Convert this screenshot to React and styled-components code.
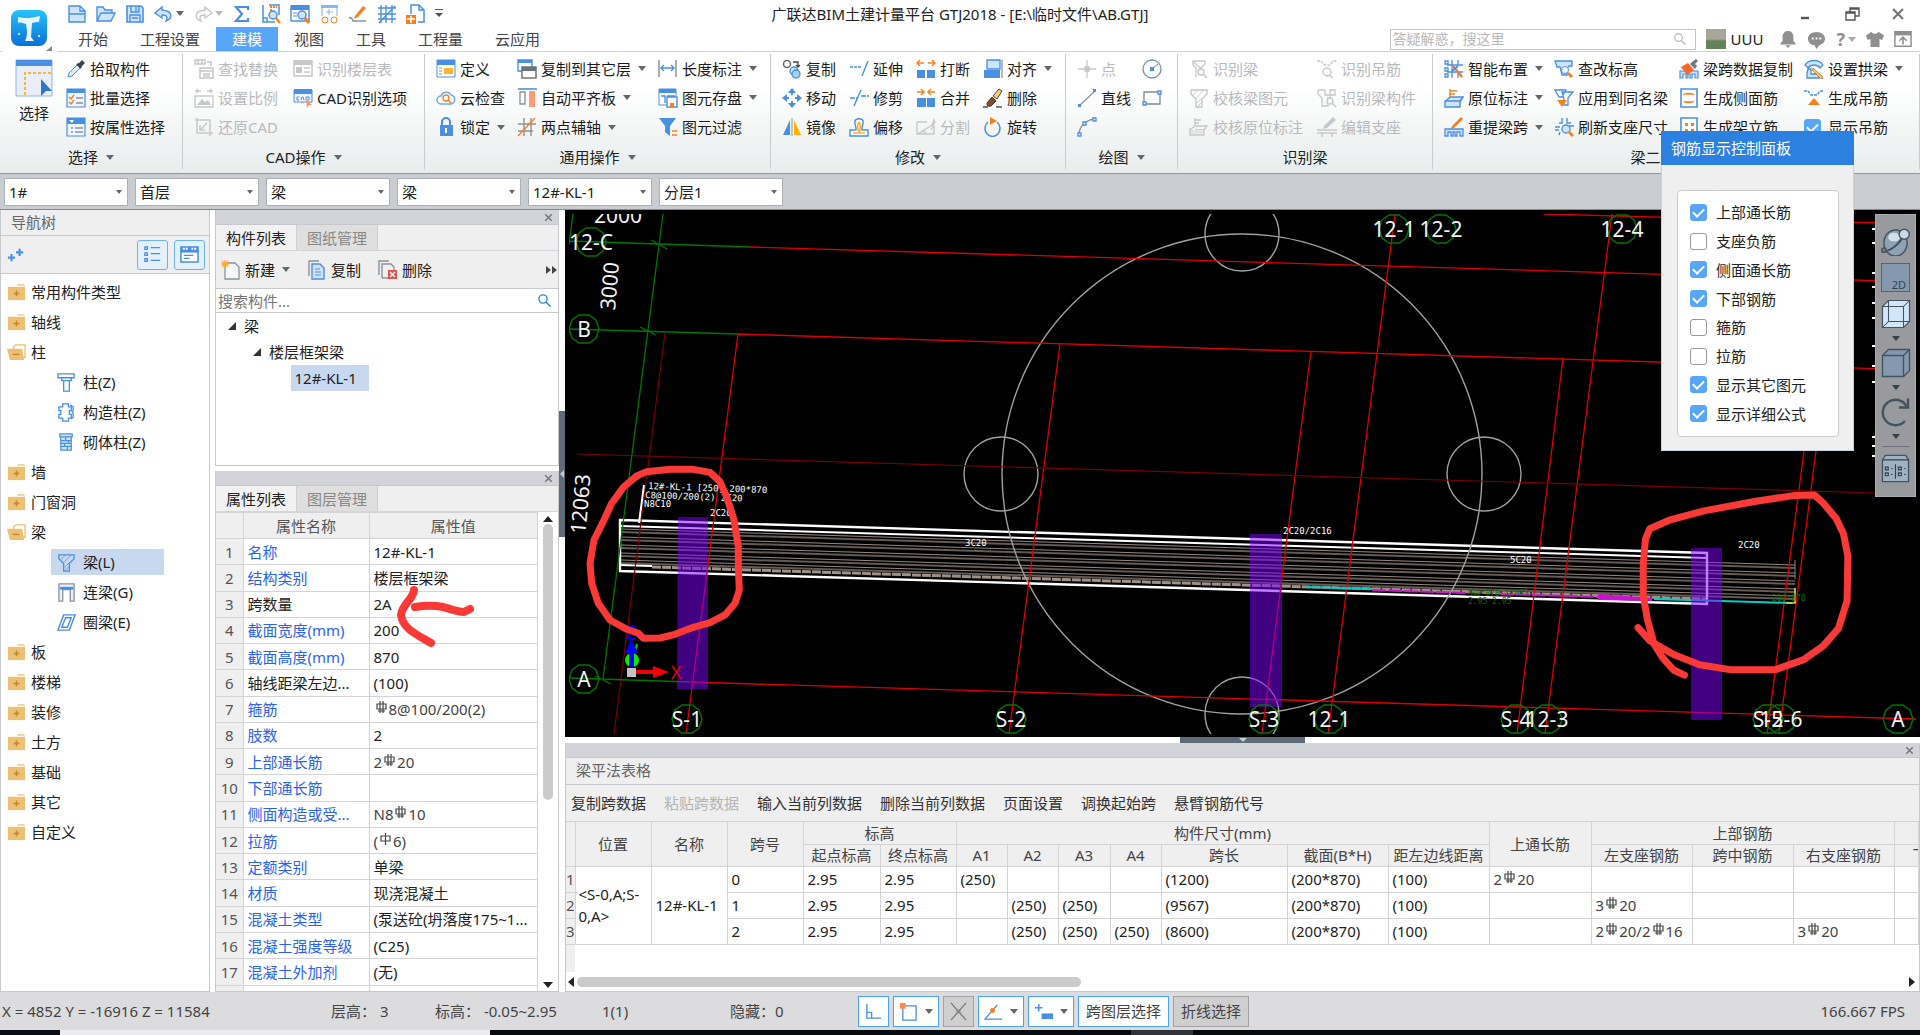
import React from "react";
import styled, { createGlobalStyle, css } from "styled-components";

const B = "#4a90e2";
const F = "#cfe3fa";
const O = "#f5821f";
const G = "#8a939b";
const D = "#c6c8ca";

const GlobalStyles = createGlobalStyle`
    * {
        box-sizing: border-box;
    }
    body {
        margin: 0;
        overflow: hidden;
        font-family: "Noto Sans", "Noto Sans CJK SC", sans-serif;
        font-size: 15px;
        line-height: 20px;
        color: #222;
    }
    button, input, select {
        font: inherit;
        color: inherit;
        margin: 0;
    }
    button {
        padding: 0;
        border: none;
        background: none;
        white-space: nowrap;
    }
    a {
        color: inherit;
        text-decoration: none;
    }
    svg {
        display: block;
        flex: none;
    }
`;

const beamShape = (c) => (
    <>
        <path d="M2 2h16v4l-5 5v8H7v-8L2 6z" fill="none" stroke={c} strokeWidth="1.4" />
        <path d="M4 7l5-5M7 10l8-8M8 15l5-5M8 19l5-5" fill="none" stroke={c} strokeWidth=".8" />
    </>
);
const cornerMark = (c, fill) => (
    <>
        <path d="M2 12l4-3h12l-3 4v5H1v-6zM15 13h-9M6 9V1M6 3h6M6 6h4" fill="none" stroke={c} strokeWidth="1.4" />
        <path d="M2 13h12v4H2z" fill={fill} />
    </>
);

const glyphs = {
    file: <path d="M2 2h11l5 5v11H2zM2 10h16M13 2v5h5" fill={F} stroke={B} strokeWidth="1.4" />,
    open: <path d="M1 17V3h6l2 3h7v3M1 17L5 9h14l-4 8z" fill={F} stroke={B} strokeWidth="1.4" />,
    save: <><path d="M2 2h14l2 2v14H2z" fill={F} stroke={B} strokeWidth="1.6" /><path d="M6 2v6h8V2M5 18v-7h10v7M11 3v4M7 14h6" fill="none" stroke={B} strokeWidth="1.4" /></>,
    undo: <path d="M8 3L1 9l7 5v-3c5 0 6 2 4 6 6-2 8-10-4-11z" fill={F} stroke={B} strokeWidth="1.4" />,
    redo: <path d="M12 3l7 6-7 5v-3c-5 0-6 2-4 6C2 15 0 7 12 6z" fill="#fafafa" stroke={D} strokeWidth="1.4" />,
    sum: <path d="M16 6V3H4l6 7-6 7h12v-3" fill="none" stroke={B} strokeWidth="2.2" />,
    calc: <><path d="M2 1v17h12M2 14h4v4M8 1h10v10" fill="none" stroke={B} strokeWidth="1.5" /><path d="M9 3h7M9 6h3" stroke={O} strokeWidth="2" strokeDasharray="2 1" /><circle cx="12" cy="11" r="4" fill={F} stroke={B} strokeWidth="1.4" /><path d="M15 14l4 5" stroke={O} strokeWidth="2.5" /></>,
    view: <><path d="M1 2h18v15H1z" fill="#fff" stroke={B} strokeWidth="1.4" /><path d="M1 1h18v5H1z" fill={B} /><path d="M3 9h4M3 12h4" stroke={B} /><circle cx="12" cy="11" r="4" fill={F} stroke={B} strokeWidth="1.4" /><path d="M15 14l4 5" stroke={O} strokeWidth="3" /></>,
    glasses: <><path d="M3 12V3h15v9" fill="none" stroke="#a9c9ee" strokeWidth="1.5" /><path d="M2 1h17v3H2z" fill="#8ab8ee" /><path d="M7 8h7M10 5v6" stroke="#9db2c8" /><circle cx="6" cy="16" r="3" fill="none" stroke={O} /><circle cx="15" cy="16" r="3" fill="none" stroke={O} /></>,
    pen: <><path d="M7 12L15 2l3 2-8 9-4 2z" fill={O} /><path d="M1 14c2-1 3 0 4 3h13" fill="none" stroke={G} strokeWidth="1.6" /></>,
    grid: <path d="M4 1v18M9 1v18M15 1v18M1 4h18M1 10h18M1 15h18M2 19L18 2" fill="none" stroke={B} strokeWidth="1.4" />,
    addPage: <><path d="M5 10V1h8l5 5v12h-6M13 1v5h5" fill="none" stroke={B} strokeWidth="1.5" /><path d="M0 11h10v9H0z" fill={O} /><path d="M5 12v7M1 15h8" stroke="#fff" strokeWidth="1.6" /></>,
    dropper: <><path d="M2 18l1-4 8-8 3 3-8 8z" fill="#dceeff" stroke={B} /><path d="M10 5l5 5 1-3 3-3-3-3-3 3z" fill="#3d4349" /></>,
    batch: <><path d="M1 1h18v18H1z" fill="#eef5fd" stroke={B} strokeWidth="1.2" /><path d="M1 1h18v4H1z" fill={B} /><path d="M3 9l2 2 3-4M3 14l2 2 3-4" fill="none" stroke={O} strokeWidth="1.4" /><path d="M10 10h7M10 15h7" stroke={G} strokeWidth="1.4" /></>,
    prop: <><path d="M1 1h18v18H1z" fill="#eef5fd" stroke={B} strokeWidth="1.2" /><path d="M1 1h18v6H1z" fill={B} /><path d="M3 3h5l-2 3z" fill="#fff" /><path d="M5 11h2M9 11h8M5 15h2M9 15h8" stroke={G} strokeWidth="1.5" /></>,
    findRep: <path d="M1 1h10v4H1zM4 1v4M8 1v4M13 3h4v4M6 9h13v10H6zM6 12h13M9 15h7M9 17h7" fill="none" stroke={D} strokeWidth="1.5" />,
    scale: <><path d="M1 8h18v11H1zM2 3h5M4 1L2 3l2 2M18 3h-5M16 1l2 2-2 2" fill="none" stroke={D} strokeWidth="1.3" /><path d="M3 17l5-6 3 3 3-2 3 5z" fill={D} /></>,
    restore: <path d="M3 1v15h16M1 3h15v16M13 6l-7 7M6 8v5h5" fill="none" stroke={D} strokeWidth="1.5" />,
    floors: <><path d="M1 2h18v15H1z" fill="none" stroke={D} strokeWidth="1.5" /><path d="M1 1h18v5H1zM3 8h6v6H3z" fill={D} /><path d="M11 9h6M11 13h6" stroke={D} strokeWidth="1.5" /></>,
    cadOpt: <><path d="M1 2h18v12H1z" fill="#eef5fd" stroke={B} /><path d="M1 1h18v5H1z" fill={B} /><path d="M6 9H4v3h2M8 12l1-3h1l1 3M13 9v3h3V9z" fill="none" stroke={B} /><path d="M13 11l6 6-3 0-2 3z" fill="#ff9466" /></>,
    define: <><path d="M1 1h18v17H1z" fill="#fff" stroke={B} /><path d="M1 1h18v5H1z" fill={B} /><path d="M8 9h9v6H8z" fill="#ffb52e" /><path d="M3 9h3M3 12h3M3 15h3" stroke={G} /></>,
    cloud: <><path d="M5 16a4 4 0 0 1 0-8 5.500 5.500 0 0 1 10-1 4.600 4.600 0 0 1 0 9z" fill="#fff" stroke="#69aaf0" strokeWidth="1.5" /><circle cx="10" cy="10" r="3" fill="none" stroke={O} strokeWidth="1.4" /><path d="M12 12l3 3" stroke={O} strokeWidth="1.6" /></>,
    lock: <><path d="M6 9V5a4 4 0 0 1 8 0v4" fill="none" stroke={B} strokeWidth="2" /><path d="M4 8h13v11H4z" fill={B} /><path d="M10 11v5" stroke="#fff" strokeWidth="2" /></>,
    copyTo: <><path d="M1 1h14v11H1z" fill="#fff" stroke={B} strokeWidth="1.4" /><path d="M1 1h14v3H1z" fill={B} /><path d="M5 8h14v11H5z" fill="#fff" stroke="#6c757d" strokeWidth="1.5" /><path d="M5 8h14v4H5z" fill="#6c757d" /></>,
    align: <><path d="M1 1h19" stroke={B} strokeWidth="1.6" /><path d="M3 4h5v12H3z" fill="none" stroke={G} strokeWidth="1.3" /><path d="M12 3h6v16h-6z" fill="#ff9c73" /></>,
    axis: <><path d="M7 1v18M14 1v18M1 7h18M1 14h15" stroke={G} strokeWidth="1.4" /><path d="M1 19L18 1" stroke={O} strokeWidth="1.4" /></>,
    length: <><path d="M1 1v17M18 1v17" stroke={G} strokeWidth="1.5" /><path d="M3 9h13M6 6L3 9l3 3M13 6l3 3-3 3" fill="none" stroke={B} strokeWidth="1.4" /></>,
    store: <><path d="M1 1h17v16H1z" fill="#fff" stroke={B} /><path d="M1 1h17v4H1z" fill={B} /><path d="M3 8h4v7M9 8h8M9 9h10v10H9z" fill="#fff" stroke={B} strokeWidth="1.4" /><path d="M12 15h4v4h-4z" fill={O} /></>,
    filter: <><path d="M1 1h17l-6 8v10l-5-4V9z" fill={B} /><path d="M14 14h5M14 18h5" stroke={O} strokeWidth="1.7" /></>,
    copy: <><circle cx="5" cy="5" r="3.500" fill="#fff" stroke="#666" strokeWidth="1.5" /><circle cx="12" cy="12" r="4" fill={F} stroke={B} strokeWidth="1.4" /><circle cx="14" cy="15" r="4" fill="#9fd4f0" stroke={B} strokeWidth="1.3" /><path d="M11 3h5v4M14 6l2 2 2-2" fill="none" stroke="#444" strokeWidth="1.3" /></>,
    move: <><path d="M10 0l4 5H6zM10 20l4-5H6zM0 10l5-4v8zM20 10l-5-4v8z" fill={B} /><path d="M10 4v3M10 13v3M4 10h3M13 10h3" stroke={B} strokeWidth="2" /></>,
    mirror: <><path d="M8 3v15H1z" fill={B} /><path d="M12 3v15h7z" fill="#ffb000" /><path d="M10 1v18" stroke={G} /></>,
    extend: <><path d="M1 8h12" stroke={B} strokeWidth="1.4" strokeDasharray="3 1" /><path d="M13 17l6-15" stroke={B} strokeWidth="1.4" /></>,
    trim: <><path d="M1 10h7M12 8h8" stroke={B} strokeWidth="1.4" strokeDasharray="5 1" /><path d="M5 18l7-16" stroke={B} strokeWidth="1.4" /></>,
    offset: <><path d="M1 19v-6h6c1-3-2-5-1-9 1-3 7-3 8 0 1 4-2 6-1 9h6v6z" fill="#fff" stroke={B} strokeWidth="1.4" /><path d="M4 16h12M10 16c1-3 2-6 1-9 0-2-2-2-2 0-1 3 0 6 1 9" fill="none" stroke="#ffb02e" strokeWidth="1.6" /></>,
    split: <><path d="M1 11h8v8H1zM11 11h8v8h-8z" fill={B} /><path d="M1 4h7M4 1L1 4l3 3M19 4h-7M16 1l3 3-3 3" fill="none" stroke={O} strokeWidth="1.5" /></>,
    join: <><path d="M1 10h9v9H1zM11 10h8v9h-8z" fill={B} /><path d="M1 4h7M5 1l3 3-3 3M19 4h-7M15 1l-3 3 3 3" fill="none" stroke={O} strokeWidth="1.5" /></>,
    cut: <path d="M1 5h10M1 5v12h17V9M2 17l14-9 2-5 1 2-4 8M6 13l4 3" fill="none" stroke={D} strokeWidth="1.4" />,
    alignTo: <><path d="M4 1h13v9H4z" fill={F} stroke={B} strokeWidth="1.3" /><path d="M1 11h16v8H1z" fill={B} /><path d="M19 1v18" stroke={G} strokeWidth="1.3" /></>,
    brush: <><path d="M10 8l6-7 3 2-5 8z" fill="#ffcb70" stroke="#444" /><path d="M4 15l5-6 4 4-5 5c-4 1-4-1-4-3z" fill="#8d4b2a" stroke="#333" /><path d="M0 19h5M13 19h6" stroke="#555" strokeWidth="1.4" /></>,
    rotate: <><path d="M5 5a7.500 8 0 1 0 9 0" fill="none" stroke={B} strokeWidth="1.5" /><path d="M7 0l7 4-7 4z" fill={O} /></>,
    point: <path d="M10 1v18M1 10h18M8 8h4v4H8z" stroke={D} strokeWidth="1.3" fill={D} />,
    line: <><path d="M2 18L18 3" stroke={G} strokeWidth="1.2" /><path d="M1 16h3v3H1zM16 1h3v3h-3z" fill={B} /></>,
    arc: <><path d="M2 18c0-9 7-15 16-16" fill="none" stroke={G} strokeWidth="1.3" /><path d="M1 16h3v3H1zM6 5h3v3H6zM16 1h3v3h-3z" fill="#fff" stroke={B} strokeWidth="1.3" /></>,
    circle: <><circle cx="10" cy="10" r="9" fill="none" stroke="#7690a8" strokeWidth="1.3" /><path d="M10 10l6-5" stroke={B} /><path d="M8 8h4v4H8z" fill={B} /></>,
    rect: <><path d="M2 4h16v12H2z" fill="none" stroke="#7d8b98" strokeWidth="1.3" /><path d="M1 14h3v3H1zM16 3h3v3h-3z" fill="#fff" stroke={B} strokeWidth="1.3" /></>,
    beam: beamShape(B),
    beamOff: beamShape(D),
    beamFind: <><path d="M4 2h12v3l-4 4M7 18v-9L4 6V2l8 8" fill="none" stroke={D} strokeWidth="1.3" /><circle cx="12" cy="13" r="3" fill="none" stroke={D} strokeWidth="1.3" /><path d="M14 15l4 4" stroke={D} strokeWidth="1.4" /></>,
    markOff: cornerMark(D, "#e6e6e6"),
    hangerOff: <><path d="M0 2h4l4 4h5l3-4h4" fill="none" stroke={D} strokeWidth="1.4" strokeDasharray="3 1" /><circle cx="10" cy="13" r="4" fill="none" stroke={D} strokeWidth="1.4" /><path d="M12 16l4 3" stroke={D} strokeWidth="1.4" /></>,
    memberOff: <><path d="M1 2h7v5h10V2h-5v10M1 2v4l4 4v8h6V9" fill="none" stroke={D} strokeWidth="1.3" /><circle cx="13" cy="13" r="3" fill="#fff" stroke={D} strokeWidth="1.3" /><path d="M15 15l4 4" stroke={D} strokeWidth="1.4" /></>,
    editOff: <><path d="M7 9l9-9 3 3-9 8-4 1z" fill={D} /><path d="M0 13h20M0 16h20M5 16v4M15 16v4" fill="none" stroke={D} strokeWidth="1.5" /></>,
    smart: <><path d="M8 1v18M14 1v5M14 14v5M3 6h16M3 13h16M1 2h3v3H1zM1 9h3v3H1zM1 15h3v3H1z" fill="none" stroke={B} strokeWidth="1.3" /><path d="M9 7l9 11" stroke="#f07a35" strokeWidth="2.5" /><path d="M8 12l6-5" stroke={B} strokeWidth="2" /></>,
    mark: <><path d="M2 13l4-4h13l-3 5v5H1v-6z" fill={F} stroke={B} strokeWidth="1.4" /><path d="M2 13h14l3-4" fill="none" stroke={B} strokeWidth="1.4" /><path d="M6 9V1M6 3h7M6 6h5" stroke={O} strokeWidth="1.5" fill="none" /></>,
    respan: <><path d="M8 9L17 0l2 2-9 9-3 1z" fill={O} /><path d="M1 12h18v7h-3v-4h-3v4h-2v-4H9v4H7v-4H4v4H1z" fill={F} stroke={B} strokeWidth="1.3" /></>,
    level: <><path d="M1 2h17v5h-3l-2 3v6H8l-2-8H3z" fill={F} stroke={B} strokeWidth="1.3" /><circle cx="11" cy="11" r="3.500" fill="#fff" stroke={B} /><path d="M14 14l4 4" stroke={O} strokeWidth="3" /></>,
    applyTo: <><path d="M1 2h11l-4 7H5zM8 4h11l-5 6v7H10v-6z" fill="#fff" stroke={B} strokeWidth="1.3" /><path d="M3 12h10l-5 7z" fill={O} /></>,
    refresh: <><path d="M8 1v5H5M13 1v5h4M1 10h5M15 9h5M1 13h4M5 18l1-3" fill="none" stroke={B} strokeWidth="1.4" /><circle cx="12" cy="12" r="4" fill={F} stroke={B} strokeWidth="1.3" /><path d="M15 15l4 4" stroke={O} strokeWidth="3" /></>,
    spanCopy: <><path d="M1 12h18v7h-3v-4h-3v4h-2v-4H9v4H7v-4H4v4H1z" fill={F} stroke={B} strokeWidth="1.2" /><path d="M2 8l7-4 6 7-7 5z" fill="#f4682c" /><path d="M11 5l5 5 2-3-2-2 3-3-2-2-4 3z" fill="#6d7983" /></>,
    side: <><path d="M2 1h16v18H2z" fill="#fff" stroke={B} strokeWidth="1.6" /><path d="M5 7c0-2 9-2 10 0M5 13c0 2 9 2 10 0M7 6h6M7 14h6" fill="none" stroke={O} strokeWidth="1.4" /></>,
    erect: <><path d="M2 1h16v18H2z" fill="#fff" stroke={B} strokeWidth="1.6" /><path d="M6 6h3v3H6zM12 6h3v3h-3zM6 12h3v3H6zM12 12h3v3h-3z" fill={O} /></>,
    arch: <><path d="M1 6c4-6 14-6 18 0l-3 3c-3-4-9-4-12 0zM4 10h3v5h8v4H3v-5z" fill={F} stroke={B} strokeWidth="1.3" /><path d="M9 9l9 8 1 3-3-1-8-8z" fill="#ffc266" stroke="#8a5a20" strokeWidth=".6" /></>,
    hanger: <><path d="M0 3h4l3 4h6l3-4h4" fill="none" stroke={B} strokeWidth="1.5" strokeDasharray="3 1" /><path d="M10 10l6 7H4z" fill={O} /></>,
    newItem: <><path d="M4 3h10l4 4v12H4z" fill="#f4f6f8" stroke={G} strokeWidth="1.3" /><path d="M4 0v8M0 4h8M1 1l6 6M7 1L1 7" stroke="#ffab2e" strokeWidth="1.3" /></>,
    copyItem: <><path d="M2 16V1h10" fill="none" stroke={G} strokeWidth="1.4" /><path d="M5 4h8l4 4v11H5z" fill={F} stroke={B} strokeWidth="1.4" /><path d="M8 9h5M8 12h6M8 15h6" stroke={B} /></>,
    delItem: <><path d="M1 15V1h10M4 18V4h9l3 3v3M4 18h6" fill="none" stroke={G} strokeWidth="1.4" /><path d="M10 10h9v9h-9z" fill="#d9534f" /><path d="M12 12l5 5M17 12l-5 5" stroke="#fff" strokeWidth="1.4" /></>,
    folder: <><path d="M10 3l2-2h6l1 2z" fill="#edd39b" /><path d="M1 4h18v14H1z" fill="#edc173" /><path d="M10 8v6M7 11h6" stroke="#c2882a" strokeWidth="1.6" /></>,
    folderOpen: <><path d="M7 4l2-2h10v13H7z" fill="#fff" stroke="#edc173" strokeWidth="1.4" /><path d="M0 6h16l2 12H3z" fill="#edc173" /><path d="M6 12h7" stroke="#c2882a" strokeWidth="1.5" /></>,
    column: <path d="M1 1h17v4h-3v3h-2v11H7V8H5V5H1zM5 5h10M7 8h6" fill="#fff" stroke={B} strokeWidth="1.4" />,
    gzColumn: <path d="M6 1h6v3h3v4h-2v4h2v4h-3v3H6v-3H2v-4h2V8H2V4h4zM14 2l3 2v4l-1 1 1 2v4l-2 2" fill="#fff" stroke={B} strokeWidth="1.4" />,
    qtColumn: <path d="M3 1h13v3h-1v14H4V4H3zM4 4h11M4 8h11M4 11h11M4 14h11M9 4v4M12 8v3M8 11v3M11 14v4" fill={F} stroke={B} strokeWidth="1.3" />,
    linkBeam: <><path d="M2 1h16v18h-4V7H6v12H2z" fill="#eef1f4" stroke={G} strokeWidth="1.4" /><path d="M3 4h14v3H3z" fill={B} /></>,
    ringBeam: <path d="M7 2h12l-6 16H1zM9 5h6l-4 10H5z" fill="#fff" stroke={B} strokeWidth="1.5" />,
    listView: <path d="M1 1h3v3H1zM1 8h3v3H1zM1 15h3v3H1zM8 2h11M8 9h11M8 17h11" fill="none" stroke={B} strokeWidth="1.5" />,
    cardView: <><path d="M1 2h18v16H1z" fill="#fff" stroke={B} strokeWidth="1.6" /><path d="M1 2h18v6H1z" fill={B} /><path d="M3 4h6M12 4h5" stroke="#fff" strokeWidth="2" strokeDasharray="2 1" /><path d="M4 11h10M4 14h6" stroke={B} strokeWidth="1.3" /></>,
    plus2: <path d="M1 13h8M5 9v8M10 7h8M14 3v8" stroke={B} strokeWidth="2.4" />,
    search: <><circle cx="8" cy="8" r="5.500" fill="none" stroke="currentColor" strokeWidth="1.8" /><path d="M12 12l6 6" stroke="currentColor" strokeWidth="2" /></>,
    bell: <path d="M10 1c4 0 6 3 6 7v4l3 4H1l3-4V8c0-4 2-7 6-7zM7 17h6l-3 3z" fill="#8f8f8f" />,
    chat: <><path d="M10 2c5 0 9 3 9 7s-3 6-6 7l-3 4-2-4c-4 0-7-3-7-7s4-7 9-7z" fill="#8f8f8f" /><path d="M5 9h2M9 9h2M13 9h2" stroke="#fff" strokeWidth="2" /></>,
    shirt: <path d="M6 2c2 3 6 3 8 0l6 4-2 5-3-1v9H5v-9l-3 1L0 6z" fill="#8f8f8f" />,
    ribbonUp: <><path d="M1 2h18v16H1z" fill="#fff" stroke="#8f8f8f" strokeWidth="1.6" /><path d="M1 2h18v4H1z" fill="#8f8f8f" /><path d="M10 16V9M6 12l4-4 4 4" fill="none" stroke="#8f8f8f" strokeWidth="1.8" /></>,
    min: <path d="M5 14h8" stroke="#555" strokeWidth="2.4" />,
    max: <path d="M8 9V4h9v8h-4M4 8h9v8H4zM4 9h9M8 5h9" fill="none" stroke="#555" strokeWidth="1.4" />,
    close: <path d="M5 5l10 10M15 5L5 15" stroke="#777" strokeWidth="2.2" />,
    ortho: <path d="M3 2v15h15M3 11h5v6" fill="none" stroke={B} strokeWidth="1.4" />,
    snap: <><path d="M4 4h14v15H4z" fill="none" stroke={B} strokeWidth="1.4" /><path d="M1 1h6v6H1z" fill="#ff8a4c" /></>,
    cross: <><path d="M2 1l16 18M18 1L2 19" stroke="#777" strokeWidth="1.3" /><path d="M8 8h4v4H8z" fill="#888" /></>,
    angle: <><path d="M19 18H1L14 3" fill="none" stroke={B} strokeWidth="1.4" /><circle cx="9" cy="9" r="2.600" fill={O} /></>,
    dynIn: <><path d="M1 6h8M5 2v8" stroke={B} strokeWidth="1.6" /><path d="M8 12h12v6H8z" fill={B} /></>,
    planet: <><ellipse cx="10" cy="11" rx="8" ry="9" fill="#8fa3b7" stroke="#45535f" /><ellipse cx="9" cy="7" rx="4" ry="3" fill="#d5dfe8" /><path d="M1 17c5 0 12-5 15-12" fill="none" stroke="#45535f" strokeWidth="1.4" /><circle cx="16" cy="5" r="3.500" fill="#cbd8e4" stroke="#45535f" /><circle cx="2" cy="16" r="1.500" fill="#6f8294" stroke="#45535f" /></>,
    flat: <path d="M0 0h20v20H0z" fill="#8499ae" stroke="#45535f" />,
    cubeWire: <><path d="M1 5l4-4h14v14l-4 4H1z" fill="#d2e6fa" stroke="#45535f" strokeWidth=".8" /><path d="M1 5h14v14M15 5l4-4M5 1v14h14M5 15l-4 4" fill="none" stroke="#45535f" strokeWidth=".7" /></>,
    cube: <><path d="M1 5l4-4h14v14l-4 4H1z" fill="#8499ae" stroke="#45535f" strokeWidth=".9" /><path d="M1 5h14v14M15 5l4-4" fill="none" stroke="#45535f" strokeWidth=".9" /></>,
    orbit: <path d="M16 16a8.500 8.500 0 1 1 1-10M18 1v6h-6" fill="none" stroke="#45535f" strokeWidth="1.6" />,
    layers: <><path d="M1 4l2-3h14l2 3v15H1z" fill="#9fb2c4" stroke="#45535f" strokeWidth=".9" /><path d="M1 4h18M10 7v10M3 9h2v2H3zM3 13h2v2H3zM12 9h2v2h-2zM12 13h2v2h-2zM7 10h1M7 14h1M16 10h1M16 14h1" fill="none" stroke="#33414d" strokeWidth=".8" /></>,
};

const Icon = ({ name, size = 20 }) => (
    <svg width={size} height={size} viewBox="0 0 20 20" aria-hidden="true">
        {glyphs[name]}
    </svg>
);

const Caret = styled.span`
    flex: none;
    width: 0;
    height: 0;
    border: 4px solid transparent;
    border-bottom: none;
    border-top: 5px solid ${(props) => props.$color || "#666"};
`;

const Page = styled.div`
    position: relative;
    display: flex;
    flex-direction: column;
    height: 100vh;
    background: #fff;
`;

/* header */

const AppButton = styled.button`
    position: absolute;
    left: 2px;
    top: 0;
    width: 55px;
    height: 53px;
    padding: 10px 9px;
    background: #fff;
`;
const TitleRow = styled.header`
    display: grid;
    grid-template-columns: 1fr auto 1fr;
    align-items: center;
    height: 27px;
    padding: 0 12px 0 67px;
`;
const QuickBar = styled.div`
    display: flex;
    align-items: center;
    gap: 9px;
`;
const QuickButton = styled.button`
    display: flex;
    align-items: center;
    gap: 2px;
`;
const AppTitle = styled.h1`
    margin: 0 55px 0 0;
    font-size: 15px;
    font-weight: 400;
`;
const WindowControls = styled.div`
    display: flex;
    justify-content: flex-end;
    gap: 26px;
`;
const TabRow = styled.nav`
    display: flex;
    align-items: stretch;
    height: 25px;
    padding-left: 62px;
    border-bottom: 1px solid #cfd1d3;
`;
const MenuTab = styled.a`
    padding: 2px 16px;
    color: ${(props) => (props.$active ? "#fff" : "#444")};
    background: ${(props) => (props.$active ? "#58a6f8" : "none")};
`;
const UserArea = styled.div`
    display: flex;
    align-items: center;
    gap: 10px;
    margin-left: auto;
    padding-right: 8px;
`;
const HelpBox = styled.div`
    display: flex;
    align-items: center;
    width: 306px;
    height: 21px;
    padding-right: 8px;
    border: 1px solid #c4c4c4;
    color: #bbb;
    input {
        flex: 1;
        min-width: 0;
        padding: 0 2px;
        border: none;
        outline: none;
        font-size: 14px;
        background: none;
    }
    input::placeholder {
        color: #b9b9b9;
    }
`;
const UserName = styled.a`
    display: flex;
    align-items: center;
    gap: 5px;
    margin-right: 6px;
`;
const Avatar = styled.span`
    width: 20px;
    height: 20px;
    background: linear-gradient(#aaa59b 50%, #62835a 60%);
`;
const HelpButton = styled(QuickButton)`
    gap: 3px;
    color: #8f8f8f;
    font-size: 18px;
    font-weight: 700;
`;

/* ribbon */

const Ribbon = styled.section`
    display: flex;
    flex: none;
    height: 122px;
    padding-top: 2px;
    background: linear-gradient(#fff 30%, #e8ecec);
    border-bottom: 1px solid #93979c;
`;
const Group = styled.div`
    display: flex;
    flex-direction: column;
    flex: ${(props) => (props.$width ? "none" : "1")};
    width: ${(props) => props.$width}px;
    margin-bottom: 4px;
    border-right: 1px solid #c9ccce;
`;
const GroupBody = styled.div`
    display: flex;
    flex: none;
    gap: ${(props) => props.$gap}px;
    height: 88px;
    padding-left: 11px;
`;
const GroupLabel = styled.div`
    display: flex;
    align-items: center;
    justify-content: center;
    gap: 8px;
    padding-top: 5px;
`;
const ToolColumn = styled.div`
    display: grid;
    grid-template-rows: repeat(3, 1fr);
`;
const Tool = styled.button`
    display: flex;
    align-items: center;
    gap: 4px;
    color: ${(props) => (props.$off ? "#b8babc" : "#1c1c1c")};
    ${Caret} {
        margin-left: 3px;
    }
`;
const ToolCheck = styled.label`
    display: flex;
    align-items: center;
    gap: 7px;
`;
const BigTool = styled.button`
    display: flex;
    flex-direction: column;
    align-items: center;
    gap: 6px;
    width: 46px;
    padding-top: 5px;
`;
const Check = styled.input`
    appearance: none;
    flex: none;
    width: 17px;
    height: 17px;
    border: 1px solid #999;
    border-radius: 3px;
    background: #fff;
    &:checked {
        border-color: #58a6f8;
        background: #58a6f8;
        display: grid;
        place-items: center;
    }
    &:checked::before {
        content: "";
        width: 9px;
        height: 5px;
        margin-bottom: 2px;
        border: solid #fff;
        border-width: 0 0 2px 2px;
        rotate: -45deg;
    }
`;

/* filters */

const FilterBar = styled.div`
    display: flex;
    align-items: center;
    gap: 7px;
    height: 36px;
    padding: 0 4px;
    background: #c9ccd1;
    border-bottom: 1px solid #858a91;
`;
const SelectWrap = styled.label`
    display: flex;
    align-items: center;
    width: 124px;
    height: 28px;
    border: 1px solid #aeb1b5;
    background: #fff;
    select {
        flex: 1;
        min-width: 0;
        height: 100%;
        padding: 0 4px;
        border: none;
        outline: none;
        appearance: none;
        background: none;
    }
    ${Caret} {
        margin-right: 5px;
        border-width: 4px 3px 0;
    }
`;

/* workspace */

const Workspace = styled.main`
    display: flex;
    flex: 1;
    min-height: 0;
`;
const panel = css`
    display: flex;
    flex-direction: column;
    min-height: 0;
    border: 1px solid #c6cacf;
    border-top: none;
    background: #fff;
`;
const NavPanel = styled.aside`
    ${panel}
    width: 210px;
    margin-right: 5px;
`;
const PanelTitle = styled.h2`
    margin: 0;
    padding: 2px 10px;
    height: ${(props) => props.$height || 26}px;
    font-size: 15px;
    font-weight: 400;
    color: #666;
    background: #efefef;
    border-bottom: 1px solid #c6cacf;
`;
const NavTools = styled.div`
    display: flex;
    align-items: center;
    gap: 6px;
    height: 38px;
    padding: 0 4px 0 6px;
    background: #efefef;
    border-bottom: 1px solid #c6cacf;
    button:first-child {
        margin-right: auto;
    }
`;
const ViewButton = styled.button`
    display: grid;
    place-items: center;
    width: 31px;
    height: 30px;
    border: 1px solid #6cb0f5;
    border-radius: 3px;
    background: #e3f0fd;
`;
const NavList = styled.ul`
    margin: 0;
    padding: 3px 0 0;
    list-style: none;
`;
const NavItem = styled.li`
    display: flex;
    align-items: center;
    height: 30px;
    padding-left: ${(props) => (props.$child ? 50 : 6)}px;
`;
const NavLink = styled.a`
    display: flex;
    align-items: center;
    gap: ${(props) => (props.$child ? 7 : 5)}px;
    width: ${(props) => (props.$child ? "113px" : "auto")};
    height: 26px;
    padding-left: ${(props) => (props.$child ? 6 : 0)}px;
    background: ${(props) => (props.$active ? "#c8d8ef" : "none")};
`;

const MiddleColumn = styled.div`
    display: flex;
    flex-direction: column;
    gap: 5px;
    width: 344px;
    min-height: 0;
`;
const ListPanel = styled.section`
    ${panel}
    height: 256px;
`;
const PropPanel = styled.section`
    ${panel}
    position: relative;
    flex: 1;
`;
const Grip = styled.div`
    display: flex;
    justify-content: flex-end;
    align-items: center;
    flex: none;
    height: 15px;
    padding-right: 3px;
    background: #d2d4d9;
    border-bottom: 1px solid #c6cacf;
`;
const TabBar = styled.div`
    display: flex;
    flex: none;
    height: 26px;
    background: #efefef;
    border-bottom: 1px solid #d4d6d9;
`;
const PanelTab = styled.button`
    width: 81px;
    border-right: 1px solid #cfd1d4;
    color: ${(props) => (props.$active ? "#222" : "#888")};
    background: ${(props) => (props.$active ? "#f2f2f2" : "#dfdfdf")};
`;
const ListTools = styled.div`
    display: flex;
    align-items: center;
    gap: 17px;
    height: 38px;
    padding: 0 1px 0 5px;
    background: #efefef;
    border-bottom: 1px solid #c6cacf;
    ${Tool}:last-child {
        margin-left: auto;
    }
`;
const SearchRow = styled.label`
    display: flex;
    align-items: center;
    height: 24px;
    padding: 0 6px 0 2px;
    color: #2f86c8;
    border-bottom: 1px solid #c6cacf;
    input {
        flex: 1;
        min-width: 0;
        padding: 0;
        border: none;
        outline: none;
        color: #222;
    }
    input::placeholder {
        color: #777;
    }
`;
const TreeRow = styled.div`
    display: flex;
    align-items: center;
    gap: 8px;
    height: 26px;
    margin-left: ${(props) => props.$level * 25 + 12}px;
`;
const TreeArrow = styled.span`
    width: 0;
    height: 0;
    border-bottom: 8px solid #333;
    border-left: 8px solid transparent;
`;
const Selected = styled.span`
    padding: 3px 12px 3px 4px;
    background: #c8d8ef;
`;

const PropBody = styled.div`
    display: flex;
    flex: 1;
    min-height: 0;
    overflow: hidden;
`;
const PropTable = styled.table`
    flex: none;
    width: 322px;
    height: 500px;
    border-collapse: collapse;
    table-layout: fixed;
    th, td {
        height: 26px;
        padding: 0 4px;
        overflow: hidden;
        white-space: nowrap;
        text-align: left;
        font-weight: 400;
        border: 1px solid #d2d4d6;
        border-left: none;
    }
    th {
        padding: 0;
        text-align: center;
        color: #555;
        background: #efefef;
    }
`;
const PropName = styled.td`
    color: ${(props) => (props.$blue ? "#2962f5" : "#222")};
`;
const VScroll = styled.div`
    display: flex;
    flex-direction: column;
    align-items: center;
    justify-content: space-between;
    flex: 1;
    padding: 3px 0;
`;
const Thumb = styled.div`
    width: ${(props) => props.$w};
    height: ${(props) => props.$h};
    border-radius: 5px;
    background: #cbcbcb;
`;
const ArrowInk = styled.svg`
    position: absolute;
    left: 178px;
    top: 109px;
`;
const Splitter = styled.div`
    display: flex;
    align-items: center;
    justify-content: center;
    flex-direction: ${(props) => (props.$flat ? "row" : "column")};
    flex: none;
    ${(props) => (props.$flat ? "height: 6px;" : "width: 6px; padding-bottom: 254px;")}
    > span {
        display: grid;
        place-items: center;
        flex: none;
        width: ${(props) => (props.$flat ? 125 : 6)}px;
        height: ${(props) => (props.$flat ? 6 : 126)}px;
        background: #5f6b78;
    }
`;
const RightColumn = styled.div`
    display: flex;
    flex-direction: column;
    flex: 1;
    min-width: 0;
`;
const Viewport = styled.div`
    position: relative;
    flex: 1;
    min-height: 0;
    background: #000;
    > svg {
        width: 100%;
        height: 100%;
    }
`;
const Palette = styled.div`
    position: absolute;
    right: 4px;
    top: 4px;
    display: flex;
    flex-direction: column;
    align-items: center;
    gap: 7px;
    width: 41px;
    height: 283px;
    padding-top: 12px;
    background: #989a9e;
    border: 1px solid #a9abae;
`;
const PaletteButton = styled.button`
    position: relative;
    display: flex;
    flex-direction: column;
    align-items: center;
    gap: 7px;
    small {
        position: absolute;
        right: 4px;
        bottom: 1px;
        font-size: 11px;
        line-height: 12px;
        color: #33414d;
    }
`;
const Divider = styled.hr`
    width: 28px;
    margin: 0;
    border: none;
    border-top: 1px solid #6d7278;
`;

/* beam table */

const BeamPanel = styled.section`
    ${panel}
    height: 249px;
    flex: none;
    overflow: hidden;
`;
const BeamTools = styled.div`
    display: flex;
    align-items: center;
    gap: 18px;
    flex: none;
    height: 37px;
    padding: 0 0 1px 5px;
    background: #efefef;
    border-bottom: 1px solid #d0d2d5;
`;
const TextButton = styled.button`
    color: ${(props) => (props.disabled ? "#b5b5b5" : "#333")};
`;
const BeamTable = styled.table`
    width: 100%;
    border-collapse: collapse;
    table-layout: fixed;
    th, td {
        height: 26px;
        padding: 0 4px;
        overflow: hidden;
        white-space: nowrap;
        text-align: left;
        font-weight: 400;
        border: 1px solid #d4d4d4;
        border-left: none;
    }
    thead th {
        height: 22px;
        padding: 0;
        text-align: center;
        color: #444;
        background: #efefef;
        border-top: none;
    }
    thead tr + tr th:last-child {
        padding-left: 18px;
        text-align: left;
    }
    tbody th {
        padding: 0;
        color: #555;
        background: #efefef;
    }
    td.wrap {
        padding: 0 3px;
        line-height: 22px;
        white-space: normal;
        word-break: break-all;
    }
`;
const Gutter = styled.div`
    flex: 1;
    width: 9px;
    background: #efefef;
`;
const HScroll = styled.div`
    display: flex;
    align-items: center;
    gap: 3px;
    height: 19px;
    padding: 0 4px 0 2px;
    svg:last-child {
        margin-left: auto;
    }
`;
const BarText = styled.span`
    display: flex;
    align-items: center;
    color: #444;
`;

/* status */

const StatusBar = styled.footer`
    display: flex;
    align-items: center;
    gap: 4px;
    height: 38px;
    padding: 0 15px 0 2px;
    background: #dcdcde;
    color: #444;
`;
const StatusCell = styled.span`
    flex: none;
    width: ${(props) => props.$width - 4}px;
    white-space: pre;
`;
const StatusButton = styled.button`
    display: flex;
    align-items: center;
    justify-content: center;
    gap: 7px;
    height: 31px;
    padding: 0 ${(props) => (props.$text ? 7 : 5)}px;
    border: 1px solid ${(props) => (props.$off ? "#a2a2a2" : "#4ba3f7")};
    background: ${(props) => (props.$off ? "#cfcfcf" : "#fff")};
`;
const Fps = styled.span`
    margin-left: auto;
`;
const TaskStrip = styled.div`
    flex: none;
    height: 5px;
    background: linear-gradient(90deg, #0a0d18 60px, #ececee 60px 490px, #06090e 490px 1131px, #30343a 1131px 1193px, #06090e 1193px);
`;

/* floating dialog */

const Dialog = styled.section`
    position: absolute;
    right: 66px;
    top: 131px;
    width: 193px;
    height: 320px;
    background: #efefef;
    border: 1px solid #c4d2e2;
    border-top: none;
    h2 {
        margin: 0 -1px;
        padding: 7px 10px;
        font-size: 15px;
        font-weight: 400;
        color: #fff;
        background: #2c80e0;
    }
`;
const DialogBox = styled.div`
    display: flex;
    flex-direction: column;
    height: 247px;
    margin: 25px 14px 0 15px;
    padding: 7px 12px 8px;
    border: 1px solid #c8cbd0;
    border-radius: 4px;
    background: #fff;
    label {
        flex: 1;
        display: flex;
        align-items: center;
        gap: 9px;
    }
`;

const t = (icon, text, arrow, off) => ({ icon, text, arrow, off });
const groups = [
    {
        label: "选择", arrow: true, width: 183, gap: 9, big: true,
        columns: [[t("dropper", "拾取构件"), t("batch", "批量选择"), t("prop", "按属性选择")]],
    },
    {
        label: "CAD操作", arrow: true, width: 242, gap: 15,
        columns: [
            [t("findRep", "查找替换", 0, 1), t("scale", "设置比例", 0, 1), t("restore", "还原CAD", 0, 1)],
            [t("floors", "识别楼层表", 0, 1), t("cadOpt", "CAD识别选项")],
        ],
    },
    {
        label: "通用操作", arrow: true, width: 346, gap: 12,
        columns: [
            [t("define", "定义"), t("cloud", "云检查"), t("lock", "锁定", 1)],
            [t("copyTo", "复制到其它层", 1), t("align", "自动平齐板", 1), t("axis", "两点辅轴", 1)],
            [t("length", "长度标注", 1), t("store", "图元存盘", 1), t("filter", "图元过滤")],
        ],
    },
    {
        label: "修改", arrow: true, width: 295, gap: 13,
        columns: [
            [t("copy", "复制"), t("move", "移动"), t("mirror", "镜像")],
            [t("extend", "延伸"), t("trim", "修剪"), t("offset", "偏移")],
            [t("split", "打断"), t("join", "合并"), t("cut", "分割", 0, 1)],
            [t("alignTo", "对齐", 1), t("brush", "删除"), t("rotate", "旋转")],
        ],
    },
    {
        label: "绘图", arrow: true, width: 112, gap: 11,
        columns: [
            [t("point", "点", 0, 1), t("line", "直线"), t("arc", "")],
            [t("circle", ""), t("rect", "")],
        ],
    },
    {
        label: "识别梁", width: 255, gap: 14,
        columns: [
            [t("beamFind", "识别梁", 0, 1), t("beamOff", "校核梁图元", 0, 1), t("markOff", "校核原位标注", 0, 1)],
            [t("hangerOff", "识别吊筋", 0, 1), t("memberOff", "识别梁构件", 0, 1), t("editOff", "编辑支座", 0, 1)],
        ],
    },
    {
        label: "梁二次编辑", arrow: true, gap: 11,
        columns: [
            [t("smart", "智能布置", 1), t("mark", "原位标注", 1), t("respan", "重提梁跨", 1)],
            [t("level", "查改标高"), t("applyTo", "应用到同名梁"), t("refresh", "刷新支座尺寸")],
            [t("spanCopy", "梁跨数据复制"), t("side", "生成侧面筋"), t("erect", "生成架立筋")],
            [t("arch", "设置拱梁", 1), t("hanger", "生成吊筋"), { check: true, text: "显示吊筋" }],
        ],
    },
];

const navItems = [
    ["folder", "常用构件类型"], ["folder", "轴线"], ["folderOpen", "柱"],
    ["column", "柱(Z)", 1], ["gzColumn", "构造柱(Z)", 1], ["qtColumn", "砌体柱(Z)", 1],
    ["folder", "墙"], ["folder", "门窗洞"], ["folderOpen", "梁"],
    ["beam", "梁(L)", 1], ["linkBeam", "连梁(G)", 1], ["ringBeam", "圈梁(E)", 1],
    ["folder", "板"], ["folder", "楼梯"], ["folder", "装修"], ["folder", "土方"],
    ["folder", "基础"], ["folder", "其它"], ["folder", "自定义"],
];

// "#" stands for the HRB400 bar sign and "$" for HPB300
const properties = [
    ["名称", "12#-KL-1", 1], ["结构类别", "楼层框架梁", 1], ["跨数量", "2A"],
    ["截面宽度(mm)", "200", 1], ["截面高度(mm)", "870", 1], ["轴线距梁左边...", "(100)"],
    ["箍筋", "#8@100/200(2)", 1, 1], ["肢数", "2", 1], ["上部通长筋", "2#20", 1, 1],
    ["下部通长筋", "", 1], ["侧面构造或受...", "N8#10", 1, 1], ["拉筋", "($6)", 1, 1],
    ["定额类别", "单梁", 1], ["材质", "现浇混凝土", 1], ["混凝土类型", "(泵送砼(坍落度175~1...", 1],
    ["混凝土强度等级", "(C25)", 1], ["混凝土外加剂", "(无)", 1],
];

const spans = [
    ["0", "2.95", "2.95", "(250)", "", "", "", "(1200)", "(200*870)", "(100)", "2#20", "", "", "", ""],
    ["1", "2.95", "2.95", "", "(250)", "(250)", "", "(9567)", "(200*870)", "(100)", "", "3#20", "", "", ""],
    ["2", "2.95", "2.95", "", "(250)", "(250)", "(250)", "(8600)", "(200*870)", "(100)", "", "2#20/2#16", "", "3#20", ""],
];
const spanColumns = [9, 76, 76, 76, 77, 76, 51, 51, 52, 51, 126, 101, 101, 102, 101, 101, 101];

const Bars = ({ text }) => (
    <BarText>
        {text.split(/([#$])/).map((part, i) =>
            part === "#" || part === "$" ? (
                <svg key={i} width="15" height="18" viewBox="0 0 15 18">
                    <path
                        d={part === "#" ? "M3 4h9v5H3zM6 1v12M9 1v12M4 11h7" : "M3 4h9v5H3zM7.500 1v12"}
                        fill="none"
                        stroke="#444"
                        strokeWidth="1.2"
                    />
                </svg>
            ) : (
                <span key={i}>{part}</span>
            )
        )}
    </BarText>
);

const Header = () => (
    <>
        <TitleRow>
            <QuickBar>
                {["file", "open", "save"].map((name) => (
                    <QuickButton key={name} aria-label={name}><Icon name={name} /></QuickButton>
                ))}
                <QuickButton aria-label="undo"><Icon name="undo" /><Caret /></QuickButton>
                <QuickButton aria-label="redo"><Icon name="redo" /><Caret $color="#bbb" /></QuickButton>
                {["sum", "calc", "view", "glasses", "pen", "grid", "addPage"].map((name) => (
                    <QuickButton key={name} aria-label={name}><Icon name={name} /></QuickButton>
                ))}
                <QuickButton aria-label="more">
                    <svg width="8" height="9" viewBox="0 0 8 9">
                        <path d="M0 0h8v1H0zM0 4h8L4 8z" fill="#555" />
                    </svg>
                </QuickButton>
            </QuickBar>
            <AppTitle>广联达BIM土建计量平台 GTJ2018 - [E:\临时文件\AB.GTJ]</AppTitle>
            <WindowControls>
                {["min", "max", "close"].map((name) => (
                    <button key={name} aria-label={name}><Icon name={name} /></button>
                ))}
            </WindowControls>
        </TitleRow>
        <TabRow>
            {["开始", "工程设置", "建模", "视图", "工具", "工程量", "云应用"].map((name) => (
                <MenuTab key={name} href="#" $active={name === "建模"}>{name}</MenuTab>
            ))}
            <UserArea>
                <HelpBox>
                    <input aria-label="搜索" placeholder="答疑解惑，搜这里" />
                    <Icon name="search" size={14} />
                </HelpBox>
                <UserName href="#"><Avatar />UUU</UserName>
                <button aria-label="notice"><Icon name="bell" size={18} /></button>
                <button aria-label="message"><Icon name="chat" size={19} /></button>
                <HelpButton>?<Caret $color="#aaa" /></HelpButton>
                <button aria-label="skin"><Icon name="shirt" size={18} /></button>
                <button aria-label="collapse"><Icon name="ribbonUp" size={18} /></button>
            </UserArea>
        </TabRow>
        <AppButton aria-label="GTJ">
            <svg width="44" height="42" viewBox="0 0 44 42">
                <defs>
                    <linearGradient id="logo" x2="0" y2="1">
                        <stop offset="0" stopColor="#27c3f7" />
                        <stop offset="1" stopColor="#0a6fdc" />
                    </linearGradient>
                </defs>
                <rect width="36" height="36" rx="8" fill="url(#logo)" />
                <path d="M7 7c7 2 14 1 22-1l-1 6c-3 0-4 0-7 1l-1 14 3 4h-9c3-6 2-11 1-17-3-1-6-2-8-1z" fill="#e8f6ff" />
                <circle cx="8" cy="24" r="1" fill="#fff" />
                <circle cx="28" cy="26" r="1" fill="#fff" />
                <path d="M41 36v5h-6z" fill="#888" />
            </svg>
        </AppButton>
    </>
);

const RibbonBar = () => (
    <Ribbon>
        {groups.map((group) => (
            <Group key={group.label} $width={group.width}>
                <GroupBody $gap={group.gap}>
                    {group.big && (
                        <BigTool>
                            <svg width="38" height="38" viewBox="0 0 38 38">
                                <path d="M1 1h36v36H1z" fill="#e9edf7" stroke="#8fb4e0" />
                                <path d="M1 1h36v6H1z" fill={B} />
                                <path d="M36 14H10v22" fill="none" stroke="#f7b733" strokeWidth="2" strokeDasharray="3 2" />
                                <path d="M26 20l11 12-6 0-5 5z" fill="#2f77c8" />
                            </svg>
                            选择
                        </BigTool>
                    )}
                    {group.columns.map((column, i) => (
                        <ToolColumn key={i}>
                            {column.map((item) =>
                                item.check ? (
                                    <ToolCheck key={item.text}>
                                        <Check type="checkbox" defaultChecked />
                                        {item.text}
                                    </ToolCheck>
                                ) : (
                                    <Tool key={item.icon} $off={item.off} aria-label={item.text || item.icon}>
                                        <Icon name={item.icon} />
                                        {item.text}
                                        {item.arrow ? <Caret /> : null}
                                    </Tool>
                                )
                            )}
                        </ToolColumn>
                    ))}
                </GroupBody>
                <GroupLabel>
                    {group.label}
                    {group.arrow && <Caret />}
                </GroupLabel>
            </Group>
        ))}
    </Ribbon>
);

const PanelGrip = () => (
    <Grip>
        <button aria-label="close"><Icon name="close" size={13} /></button>
    </Grip>
);

const Navigation = () => (
    <NavPanel>
        <PanelTitle>导航树</PanelTitle>
        <NavTools>
            <button aria-label="add"><Icon name="plus2" size={18} /></button>
            <ViewButton aria-label="list"><Icon name="listView" size={17} /></ViewButton>
            <ViewButton aria-label="card"><Icon name="cardView" size={19} /></ViewButton>
        </NavTools>
        <NavList>
            {navItems.map(([icon, text, child]) => (
                <NavItem key={text} $child={child}>
                    <NavLink href="#" $child={child} $active={text === "梁(L)"}>
                        <Icon name={icon} size={19} />
                        {text}
                    </NavLink>
                </NavItem>
            ))}
        </NavList>
    </NavPanel>
);

const ComponentList = () => (
    <ListPanel>
        <PanelGrip />
        <TabBar>
            <PanelTab $active>构件列表</PanelTab>
            <PanelTab>图纸管理</PanelTab>
        </TabBar>
        <ListTools>
            <Tool><Icon name="newItem" />新建<Caret /></Tool>
            <Tool><Icon name="copyItem" />复制</Tool>
            <Tool><Icon name="delItem" />删除</Tool>
            <Tool aria-label="more">
                <svg width="11" height="8" viewBox="0 0 11 8">
                    <path d="M0 0l5 4-5 4zM6 0l5 4-5 4z" fill="#444" />
                </svg>
            </Tool>
        </ListTools>
        <SearchRow>
            <input aria-label="搜索构件" placeholder="搜索构件..." />
            <Icon name="search" size={15} />
        </SearchRow>
        <TreeRow $level={0}><TreeArrow />梁</TreeRow>
        <TreeRow $level={1}><TreeArrow />楼层框架梁</TreeRow>
        <TreeRow $level={2.5}><Selected>12#-KL-1</Selected></TreeRow>
    </ListPanel>
);

const PropertyList = () => (
    <PropPanel>
        <PanelGrip />
        <TabBar>
            <PanelTab $active>属性列表</PanelTab>
            <PanelTab>图层管理</PanelTab>
        </TabBar>
        <PropBody>
            <PropTable>
                <colgroup>
                    <col width="27" />
                    <col width="126" />
                    <col />
                </colgroup>
                <thead>
                    <tr>
                        <th />
                        <th>属性名称</th>
                        <th>属性值</th>
                    </tr>
                </thead>
                <tbody>
                    {properties.map(([name, value, blue, bar], i) => (
                        <tr key={name}>
                            <th>{i + 1}</th>
                            <PropName $blue={blue}>{name}</PropName>
                            <td>{bar ? <Bars text={value} /> : value}</td>
                        </tr>
                    ))}
                    <tr>
                        <th />
                        <td />
                        <td />
                    </tr>
                </tbody>
            </PropTable>
            <VScroll>
                <div>
                    <svg width="10" height="9" viewBox="0 0 10 9"><path d="M0 7l5-6 5 6z" fill="#222" /></svg>
                    <Thumb $w="10px" $h="276px" />
                </div>
                <svg width="10" height="6" viewBox="0 0 10 6"><path d="M0 0l5 6 5-6z" fill="#222" /></svg>
            </VScroll>
        </PropBody>
        <ArrowInk width="90" height="70" viewBox="395 581 90 70">
            <path
                d="M415 591c-1 10-12 14-13 25 2 14 15 19 30 28M416 608c12-2 18-2 28 0 8 2 14 5 21 5l6-3"
                fill="none"
                stroke="#fb3a38"
                strokeWidth="8"
                strokeLinecap="round"
                strokeLinejoin="round"
            />
        </ArrowInk>
    </PropPanel>
);

const bubbles = [
    [591, 242, "12-C"], [584, 329, "B"], [584, 679, "A"], [687, 719, "S-1"], [1011, 719, "S-2"],
    [1264, 719, "S-3"], [1329, 719, "12-1"], [1516, 719, "S-4"], [1547, 719, "12-3"],
    [1768, 719, "S-5"], [1781, 719, "12-6"], [1898, 719, "A"],
    [1394, 229, "12-1"], [1441, 229, "12-2"], [1622, 229, "12-4"],
];
const redAxes = [
    "M750 247L1920 282", "M738 334L1920 370", "M690 682L1916 719", "M1544 214L1920 224",
    "M738 334L686 734", "M1060 344L1009 734", "M1311 351L1262 734", "M1395 214L1328 734",
    "M1563 358L1517 734", "M1612 214L1545 734", "M1835 214L1767 734", "M1847 214L1779 734",
];
const rebarOffsets = [529, 532, 537, 540, 545, 548, 553, 556, 560, 563];

const Drawing = () => (
    <svg viewBox="565 210 1355 527" preserveAspectRatio="xMinYMin slice" role="img" aria-label="12#-KL-1">
        <clipPath id="canvas"><path d="M569 214h1347v520H569z" /></clipPath>
        <g clipPath="url(#canvas)" fill="none" fontFamily='"Noto Sans", sans-serif'>
            {rebarOffsets.map((y, i) => (
                <path
                    key={y}
                    d={`M621 ${y}L1795 ${y + 36}`}
                    stroke={i % 2 ? "#645a55" : "#96887f"}
                    strokeWidth={i % 2 ? 2 : 1}
                />
            ))}
            <path d="M652 567L1707 599" stroke="#a09187" strokeWidth="3" strokeDasharray="9 1" />
            <path d="M1795 560v19M1795 588v14" stroke="#8e8580" />
            <path d="M620 520L1707 553V604L620 571z" stroke="#fff" strokeWidth="2.4" />
            <path d="M620 526L1707 558M620 565l32 1" stroke="#fff" strokeWidth="2" />
            <g stroke="#a0a0a0" strokeWidth="1.4">
                <circle cx="1242" cy="474" r="240" />
                <circle cx="1001" cy="474" r="37" />
                <circle cx="1484" cy="474" r="37" />
                <circle cx="1242" cy="234" r="37" />
                <circle cx="1242" cy="714" r="37" />
            </g>
            <path d={redAxes.join("")} stroke="#dc0000" strokeWidth="1.3" />
            <path d="M665 333L614 734M577 454L1875 493" stroke="#780000" strokeWidth="1.2" />
            <path
                d="M573 214l-4 31M663 214L603 679M569 241l181 6M651 240l16 9M569 329l169 5M640 327l16 8M569 678l121 4M595 676l16 8"
                stroke="#007500"
                strokeWidth="1.3"
            />

            <path d="M644 485l-5 38" stroke="#fff" strokeWidth="2" />
            <path d="M1306 587l66 2M1654 599l138 4" stroke="#00cccc" strokeWidth="2" />
            <path d="M1372 590l94 3M1500 594l100 3" stroke="#c818c8" strokeWidth="2" strokeDasharray="14 2" />
            <path d="M1598 594l54 4v3l-54-1z" fill="#d010d0" />
            <path d="M1795 588v15h-9" stroke="#d8d830" strokeWidth="1.5" />

            <g fill="#fff" fontSize="9" fontFamily='"DejaVu Sans Mono", monospace'>
                <text x="648" y="489" transform="rotate(2 648 489)">12#-KL-1 [250] 200*870</text>
                <text x="645" y="498" transform="rotate(2 645 498)">C8@100/200(2) 2C20</text>
                <text x="644" y="507">N8C10</text>
                <text x="710" y="516">2C20</text>
                <text x="965" y="546">3C20</text>
                <text x="1283" y="534">2C20/2C16</text>
                <text x="1510" y="563">5C20</text>
                <text x="1738" y="548">2C20</text>
            </g>
            <g fill="#0b6a0b" fontSize="8" fontFamily='"DejaVu Sans Mono", monospace'>
                <text x="1466" y="596">200*870 12063</text>
                <text x="1468" y="604">2.95 2.95</text>
                <text x="1772" y="601">200*870</text>
            </g>

            <g fill="#7f00ff" fillOpacity=".5">
                <path d="M678 517h30v172h-31zM1250 534h32v173h-32zM1691 548h31v172h-31z" />
            </g>

            <g stroke="#007500" strokeWidth="1.4">
                {bubbles.map(([x, y], i) => (
                    <path key={i} d={`M${x - 15} ${y}l3 -9l7 -5h10l7 5l3 9l-3 9l-7 5h-10l-7 -5z`} />
                ))}
            </g>
            <g fill="#f2f2f2" fontSize="21" textAnchor="middle">
                {bubbles.map(([x, y, label], i) => (
                    <text key={i} x={x} y={y + 8}>{label}</text>
                ))}
                <text x="618" y="223">2000</text>
                <text x="609" y="294" transform="rotate(-85 609 286)">3000</text>
                <text x="580" y="512" transform="rotate(-85 580 504)">12063</text>
            </g>
            <path
                d="M1872 229h6M1872 243h6M1872 273h6M1872 287h6M1872 303h6M1872 318h6M1872 346h6M1872 366h6M1872 382h6M1872 437h6M1872 446h6M1872 456h6"
                stroke="#fff"
                strokeWidth="2"
            />

            <circle cx="632" cy="660" r="7" fill="#00f000" />
            <path d="M637 644l-2 7" stroke="#00d000" strokeWidth="2" />
            <path d="M629 668v-15h-4l6-14 7 14h-4v15z" fill="#0000f5" />
            <path d="M636 670h17v-4l16 6-16 6v-4h-17z" fill="#f50000" />
            <path d="M627 668h9v9h-9z" fill="#c4c4c4" />
            <text x="626" y="639" fill="#0000f5" fontSize="18">Z</text>
            <text x="671" y="679" fill="#e80000" fontSize="18">X</text>

            <g stroke="#fb3a38" strokeLinecap="round" strokeLinejoin="round">
                <path
                    transform="translate(560 440) scale(.3333)"
                    strokeWidth="21"
                    d="M260 95L230 108 190 142 155 190 132 240 102 300 90 370 95 430 115 490 150 540 200 568 235 580 250 595 300 594 345 583 400 562 450 548 495 525 525 490 538 450 535 380 535 320 522 240 500 170 480 125 450 97 400 88 330 88z"
                />
                <path
                    transform="translate(1240 200) scale(.4336 .3443)"
                    vectorEffect="non-scaling-stroke"
                    strokeWidth="7"
                    d="M918 1242L945 1280 1000 1320 1060 1350 1130 1364 1235 1364 1300 1335 1345 1295 1380 1245 1400 1165 1402 1035 1392 970 1375 925 1345 880 1325 857 1280 858 1190 875 1070 903 990 930 945 955 935 985 930 1060 930 1150 940 1220 955 1290 975 1330 1000 1365 1025 1380"
                />
            </g>
        </g>
    </svg>
);

const ModelView = () => (
    <Viewport>
        <Drawing />
        <Palette>
            <PaletteButton aria-label="orbit"><Icon name="planet" size={29} /></PaletteButton>
            <PaletteButton><Icon name="flat" size={29} /><small>2D</small></PaletteButton>
            <PaletteButton aria-label="wire"><Icon name="cubeWire" size={30} /><Caret $color="#33414d" /></PaletteButton>
            <PaletteButton aria-label="solid"><Icon name="cube" size={30} /><Caret $color="#33414d" /></PaletteButton>
            <PaletteButton aria-label="rotate"><Icon name="orbit" size={30} /><Caret $color="#33414d" /></PaletteButton>
            <Divider />
            <PaletteButton aria-label="layers"><Icon name="layers" size={29} /></PaletteButton>
        </Palette>
    </Viewport>
);

const BeamSheet = () => (
    <BeamPanel>
        <PanelGrip />
        <PanelTitle $height={27}>梁平法表格</PanelTitle>
        <BeamTools>
            <TextButton>复制跨数据</TextButton>
            <TextButton disabled>粘贴跨数据</TextButton>
            <TextButton>输入当前列数据</TextButton>
            <TextButton>删除当前列数据</TextButton>
            <TextButton>页面设置</TextButton>
            <TextButton>调换起始跨</TextButton>
            <TextButton>悬臂钢筋代号</TextButton>
        </BeamTools>
        <BeamTable>
            <colgroup>
                {spanColumns.map((width, i) => <col key={i} width={width} />)}
                <col />
            </colgroup>
            <thead>
                <tr>
                    <th rowSpan="2" />
                    <th rowSpan="2">位置</th>
                    <th rowSpan="2">名称</th>
                    <th rowSpan="2">跨号</th>
                    <th colSpan="2">标高</th>
                    <th colSpan="7">构件尺寸(mm)</th>
                    <th rowSpan="2">上通长筋</th>
                    <th colSpan="3">上部钢筋</th>
                    <th />
                </tr>
                <tr>
                    {["起点标高", "终点标高", "A1", "A2", "A3", "A4", "跨长", "截面(B*H)", "距左边线距离", "左支座钢筋", "跨中钢筋", "右支座钢筋", "下"].map((name) => (
                        <th key={name}>{name}</th>
                    ))}
                </tr>
            </thead>
            <tbody>
                {spans.map((row, i) => (
                    <tr key={i}>
                        <th>{i + 1}</th>
                        {i === 0 && <td rowSpan="3" className="wrap">&lt;S-0,A;S-0,A&gt;</td>}
                        {i === 0 && <td rowSpan="3">12#-KL-1</td>}
                        {row.map((cell, j) => (
                            <td key={j}>{cell.includes("#") ? <Bars text={cell} /> : cell}</td>
                        ))}
                    </tr>
                ))}
            </tbody>
        </BeamTable>
        <Gutter />
        <HScroll>
            <svg width="6" height="10" viewBox="0 0 6 10"><path d="M6 0v10L0 5z" fill="#222" /></svg>
            <Thumb $w="504px" $h="10px" />
            <svg width="6" height="10" viewBox="0 0 6 10"><path d="M0 0v10l6-5z" fill="#222" /></svg>
        </HScroll>
    </BeamPanel>
);

const RebarDialog = () => (
    <Dialog>
        <h2>钢筋显示控制面板</h2>
        <DialogBox>
            {[
                ["上部通长筋", true], ["支座负筋", false], ["侧面通长筋", true], ["下部钢筋", true],
                ["箍筋", false], ["拉筋", false], ["显示其它图元", true], ["显示详细公式", true],
            ].map(([name, on]) => (
                <label key={name}>
                    <Check type="checkbox" defaultChecked={on} />
                    {name}
                </label>
            ))}
        </DialogBox>
    </Dialog>
);

const App = () => (
    <Page>
        <GlobalStyles />
        <Header />
        <RibbonBar />
        <FilterBar>
            {["1#", "首层", "梁", "梁", "12#-KL-1", "分层1"].map((value, i) => (
                <SelectWrap key={i}>
                    <select aria-label={value}>
                        <option>{value}</option>
                    </select>
                    <Caret />
                </SelectWrap>
            ))}
        </FilterBar>
        <Workspace>
            <Navigation />
            <MiddleColumn>
                <ComponentList />
                <PropertyList />
            </MiddleColumn>
            <Splitter>
                <span>
                    <svg width="4" height="8" viewBox="0 0 4 8"><path d="M4 0v8L0 4z" fill="#c5ccd3" /></svg>
                </span>
            </Splitter>
            <RightColumn>
                <ModelView />
                <Splitter $flat>
                    <span>
                        <svg width="8" height="4" viewBox="0 0 8 4"><path d="M0 0h8L4 4z" fill="#c5ccd3" /></svg>
                    </span>
                </Splitter>
                <BeamSheet />
            </RightColumn>
        </Workspace>
        <StatusBar>
            <StatusCell $width={329}>X = 4852 Y = -16916 Z = 11584</StatusCell>
            <StatusCell $width={104}>层高： 3</StatusCell>
            <StatusCell $width={167}>标高： -0.05~2.95</StatusCell>
            <StatusCell $width={128}>1(1)</StatusCell>
            <StatusCell $width={128}>隐藏：0</StatusCell>
            <StatusButton aria-label="ortho"><Icon name="ortho" size={19} /></StatusButton>
            <StatusButton aria-label="snap"><Icon name="snap" size={19} /><Caret /></StatusButton>
            <StatusButton $off aria-label="cross"><Icon name="cross" size={19} /></StatusButton>
            <StatusButton aria-label="angle"><Icon name="angle" size={19} /><Caret /></StatusButton>
            <StatusButton aria-label="input"><Icon name="dynIn" size={19} /><Caret /></StatusButton>
            <StatusButton $text>跨图层选择</StatusButton>
            <StatusButton $text $off>折线选择</StatusButton>
            <Fps>166.667 FPS</Fps>
        </StatusBar>
        <TaskStrip />
        <RebarDialog />
    </Page>
);

export default App;
